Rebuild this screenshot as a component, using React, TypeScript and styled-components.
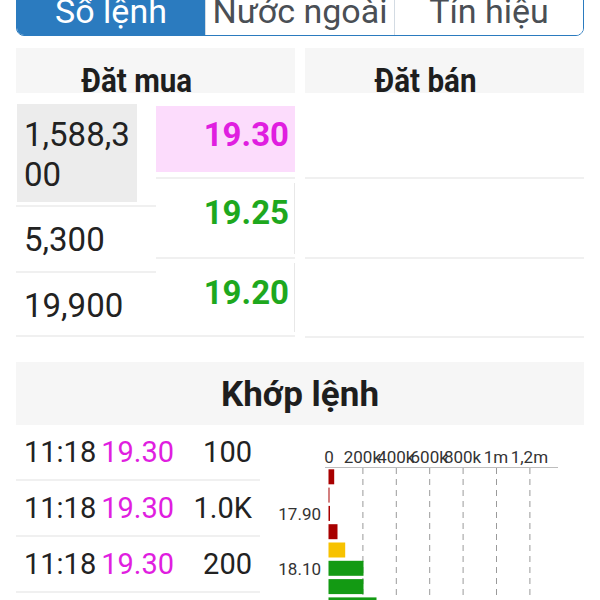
import React from "react";
import styled, { createGlobalStyle } from "styled-components";

const GlobalStyle = createGlobalStyle`
  * { box-sizing: border-box; }
  body {
    margin: 0;
    background: #fff;
    font-family: Roboto, "Noto Sans", "Liberation Sans", sans-serif;
    color: #222;
    overflow: hidden;
  }
`;

const MAGENTA = "#e01ee0";
const GREEN = "#1ea81e";
const LINE = "#f0f0f0";

const buyRows = [
  { vol: "1,588,300", price: "19.30", color: MAGENTA, hot: true, volH: 110, priceH: 82 },
  { vol: "5,300", price: "19.25", color: GREEN, hot: false, volH: 66, priceH: 80 },
  { vol: "19,900", price: "19.20", color: GREEN, hot: false, volH: 64, priceH: 78 },
];

const sellRows = [82, 80, 79];

const trades = [
  { time: "11:18", price: "19.30", vol: "100" },
  { time: "11:18", price: "19.30", vol: "1.0K" },
  { time: "11:18", price: "19.30", vol: "200" },
];

const axis = ["0", "200k", "400k", "600k", "800k", "1m", "1,2m"];

const bars = [
  { w: 5.7, color: "#a80000" },
  { w: 1, color: "#a80000" },
  { w: 1.5, color: "#a80000" },
  { w: 9, color: "#a80000" },
  { w: 16.7, color: "#f7c200" },
  { w: 35, color: "#139a13" },
  { w: 35, color: "#139a13" },
  { w: 48, color: "#139a13" },
];

const App = () => {
  return (
    <Page>
      <GlobalStyle />
      <TabBar>
        <Tab $active>Sổ lệnh</Tab>
        <Tab>Nước ngoài</Tab>
        <Tab>Tín hiệu</Tab>
      </TabBar>

      <Book>
        <Side>
          <SideHeader>
            <HeaderText>Đặt mua</HeaderText>
          </SideHeader>
          <BuyBody>
            <Column>
              {buyRows.map((r, i) =>
                r.hot ? (
                  <VolCell key={i} $h={r.volH} $hot>
                    <VolBox>{r.vol}</VolBox>
                  </VolCell>
                ) : (
                  <VolCell key={i} $h={r.volH}>
                    {r.vol}
                  </VolCell>
                )
              )}
            </Column>
            <Column>
              {buyRows.map((r, i) => (
                <PriceCell key={i} $h={r.priceH} $hot={r.hot}>
                  <PriceBox $hot={r.hot} $color={r.color}>
                    {r.price}
                  </PriceBox>
                </PriceCell>
              ))}
            </Column>
          </BuyBody>
        </Side>
        <Side>
          <SideHeader>
            <HeaderText>Đặt bán</HeaderText>
          </SideHeader>
          <Column>
            {sellRows.map((h, i) => (
              <EmptyRow key={i} $h={h} />
            ))}
          </Column>
        </Side>
      </Book>

      <MatchHeader>Khớp lệnh</MatchHeader>
      <MatchBody>
        <TradeList>
          {trades.map((t, i) => (
            <TradeRow key={i}>
              <span>{t.time}</span>
              <TradePrice>{t.price}</TradePrice>
              <TradeVol>{t.vol}</TradeVol>
            </TradeRow>
          ))}
        </TradeList>
        <Chart width={320} height={170} viewBox="0 0 320 170">
          {axis.map((a, i) => (
            <text
              key={a}
              x={59 + i * 33.4}
              y={33}
              fontSize={17}
              textAnchor="middle"
              fill="#333"
              fontFamily="Roboto, sans-serif"
            >
              {a}
            </text>
          ))}
          <line x1={55} y1={37.5} x2={288} y2={37.5} stroke="#bdbdbd" strokeWidth={1} />
          {axis.slice(1).map((a, i) => (
            <line
              key={a}
              x1={92.9 + i * 33.4}
              y1={38}
              x2={92.9 + i * 33.4}
              y2={170}
              stroke="#9a9a9a"
              strokeWidth={1}
              strokeDasharray="6 5"
            />
          ))}
          {bars.map((b, i) => (
            <rect key={i} x={58.5} y={39.3 + i * 18.3} width={b.w} height={15} fill={b.color} />
          ))}
          <text x={51} y={90} fontSize={17} textAnchor="end" fill="#333" fontFamily="Roboto, sans-serif">
            17.90
          </text>
          <text x={51} y={145} fontSize={17} textAnchor="end" fill="#333" fontFamily="Roboto, sans-serif">
            18.10
          </text>
        </Chart>
      </MatchBody>
    </Page>
  );
};

const Page = styled.div`
  padding: 0 16px;
`;

const TabBar = styled.div`
  display: flex;
  margin-top: -14px;
  height: 50px;
  border: 1px solid #2b7bbf;
  border-radius: 8px;
  overflow: hidden;
`;

const Tab = styled.div<{ $active?: boolean }>`
  flex: 1;
  min-width: 0;
  text-align: center;
  white-space: nowrap;
  overflow: hidden;
  font-size: 34px;
  line-height: 48px;
  background: ${(p) => (p.$active ? "#2b7bbf" : "#fff")};
  color: ${(p) => (p.$active ? "#fff" : "#4a4f55")};
  & + & {
    border-left: 1px solid #d3dbe3;
  }
`;

const Book = styled.div`
  display: grid;
  grid-template-columns: 1fr 1fr;
  gap: 10px;
  margin-top: 12px;
`;

const Side = styled.div`
  display: flex;
  flex-direction: column;
`;

const SideHeader = styled.div`
  height: 45px;
  margin-bottom: 4px;
  overflow: hidden;
  background: #f6f6f6;
  display: flex;
  justify-content: center;
  padding-right: 38px;
`;

const HeaderText = styled.span`
  display: block;
  font-size: 34px;
  font-weight: 700;
  line-height: 64px;
  color: #1e1e1e;
  white-space: nowrap;
  transform: scaleX(0.87);
`;

const BuyBody = styled.div`
  display: grid;
  grid-template-columns: 140px 1fr;
`;

const Column = styled.div`
  display: flex;
  flex-direction: column;
`;

const VolCell = styled.div<{ $h: number; $hot?: boolean }>`
  height: ${(p) => p.$h}px;
  border-bottom: 2px solid ${LINE};
  padding: ${(p) => (p.$hot ? "7px 19px 0 1px" : "13px 8px 0")};
  font-size: 33px;
  line-height: 39.5px;
  color: #222;
`;

const VolBox = styled.div`
  height: 98px;
  background: #ececec;
  padding: 11px 2px 0 7px;
  word-break: break-all;
`;

const PriceCell = styled.div<{ $h: number; $hot: boolean }>`
  height: ${(p) => p.$h}px;
  border-bottom: 2px solid ${LINE};
  padding: ${(p) => (p.$hot ? "9px 0 5px" : "4px 0 3px")};
`;

const PriceBox = styled.div<{ $hot: boolean; $color: string }>`
  height: 100%;
  background: ${(p) => (p.$hot ? "#fcdcfc" : "transparent")};
  border-right: 1px solid ${(p) => (p.$hot ? "transparent" : "#e8e8e8")};
  padding: ${(p) => (p.$hot ? "10px" : "11px")} 5px 0 0;
  text-align: right;
  font-size: 33px;
  font-weight: 700;
  line-height: 38px;
  color: ${(p) => p.$color};
`;

const EmptyRow = styled.div<{ $h: number }>`
  height: ${(p) => p.$h}px;
  border-bottom: 2px solid ${LINE};
`;

const MatchHeader = styled.div`
  margin-top: 24px;
  height: 63px;
  padding-top: 2px;
  background: #f6f6f6;
  text-align: center;
  font-size: 35px;
  font-weight: 700;
  line-height: 61px;
  color: #1e1e1e;
`;

const MatchBody = styled.div`
  display: flex;
  align-items: flex-start;
`;

const TradeList = styled.div`
  width: 244px;
  flex: none;
  display: flex;
  flex-direction: column;
`;

const TradeRow = styled.div`
  height: 56px;
  display: flex;
  align-items: center;
  padding: 0 8px;
  border-bottom: 2px solid ${LINE};
  font-size: 29px;
  color: #222;
  white-space: nowrap;
`;

const TradePrice = styled.span`
  margin-left: 5px;
  color: ${MAGENTA};
`;

const TradeVol = styled.span`
  margin-left: auto;
`;

const Chart = styled.svg`
  flex: none;
  margin: 5px 0 0 10px;
  display: block;
`;

export default App;
